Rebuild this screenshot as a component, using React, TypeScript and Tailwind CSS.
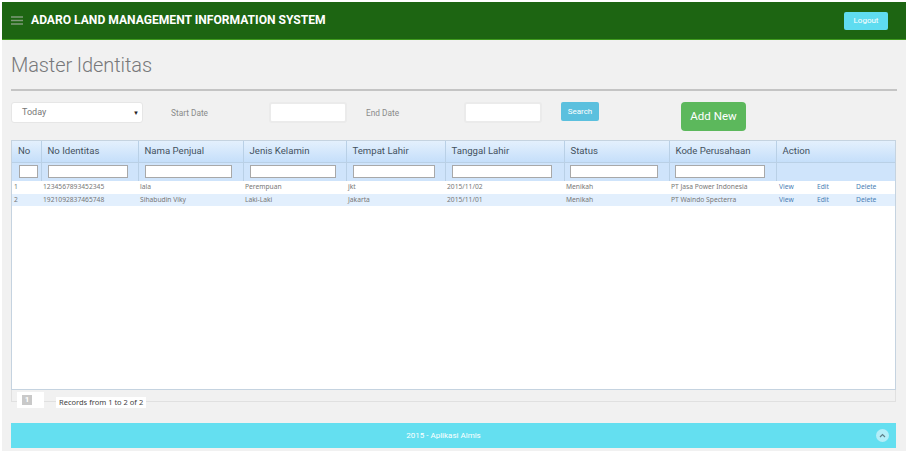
const columns = [
  { label: 'No', width: 'w-[29px]', input: 'pl-[7px] pr-[3px]' },
  { label: 'No Identitas', width: 'w-[97px]', input: 'pl-[6px] pr-[10px]' },
  { label: 'Nama Penjual', width: 'w-[105px]', input: 'pl-[6px] pr-[11px]' },
  { label: 'Jenis Kelamin', width: 'w-[103px]', input: 'pl-[6px] pr-[10px]' },
  { label: 'Tempat Lahir', width: 'w-[99px]', input: 'pl-[6px] pr-[10px]' },
  { label: 'Tanggal Lahir', width: 'w-[119px]', input: 'pl-[6px] pr-[12px]' },
  { label: 'Status', width: 'w-[105px]', input: 'pl-[5px] pr-[11px]' },
  { label: 'Kode Perusahaan', width: 'w-[107px]', input: 'pl-[5px] pr-[11px]' },
  { label: 'Action', width: 'w-[119px]', input: '' },
]

const rows = [
  ['1', '1234567893452345', 'lala', 'Perempuan', 'jkt', '2015/11/02', 'Menikah', 'PT Jasa Power Indonesia'],
  ['2', '1921092837465748', 'Sihabudin Viky', 'Laki-Laki', 'Jakarta', '2015/11/01', 'Menikah', 'PT Waindo Specterra'],
]

export default function App() {
  return (
    <div className="w-[910px] h-[451px] overflow-hidden bg-white pt-[2px] pl-[2px] pr-[4px] font-['Roboto',sans-serif]">
      <div className="h-[449px] bg-[#f1f1f1]">
        <header className="h-[38px] bg-[#1d6512] border-b border-[#3f9a1e] flex items-center pl-[9px] pr-[18px]">
          <svg width="12" height="9" viewBox="0 0 12 9" className="shrink-0">
            <path d="M0 1h12M0 4.5h12M0 8h12" stroke="#7f9a7a" strokeWidth="1.6" />
          </svg>
          <h1 className="ml-[8px] text-[12.1px] font-bold text-white">ADARO LAND MANAGEMENT INFORMATION SYSTEM</h1>
          <button className="ml-auto w-[44px] h-[18px] rounded-[2px] bg-[#5fdcf0] text-[8px] text-white">Logout</button>
        </header>

        <div className="px-[9px]">
          <h2 className="pt-[13px] text-[20px] leading-[24px] font-light text-[#77787a] tracking-[-0.1px]">Master Identitas</h2>
          <div className="mt-[12px] h-[2px] bg-[#c4c4c4]" />

          <div className="mt-[11px] h-[40px] flex items-start text-[8.3px] text-[#8a8a8a]">
            <div className="w-[132px] h-[21px] bg-white border border-[#e6e6e6] rounded-[3px] flex items-center justify-between pl-[10px] pr-[3px] text-[#777]">
              <span className="text-[9px]">Today</span>
              <span className="text-[6px] text-[#222]">▼</span>
            </div>
            <span className="ml-[28px] mt-[5px] w-[98px]">Start Date</span>
            <div className="w-[78px] h-[21px] bg-white border-2 border-[#ebebeb] rounded-[3px]" />
            <span className="ml-[19px] mt-[5px] w-[98px]">End Date</span>
            <div className="w-[78px] h-[21px] bg-white border-2 border-[#ebebeb] rounded-[3px]" />
            <button className="ml-[19px] w-[38px] h-[19px] rounded-[2px] bg-[#5bc0de] text-[8px] text-white">Search</button>
            <button className="ml-[82px] w-[65px] h-[29px] rounded-[4px] bg-[#5cb85c] text-[11.5px] text-white">Add New</button>
          </div>

          <div className="mt-[-2px] h-[250px] w-[885px] bg-white border border-[#c5d3e0]">
            <table className="table-fixed w-[883px] border-collapse">
              <thead>
                <tr className="h-[21px] bg-gradient-to-b from-[#e4f0fd] to-[#c5dffa]">
                  {columns.map((col) => (
                    <th key={col.label} className={`${col.width} px-[6px] border-r border-b border-[#b9d0e6] last:border-r-0 text-left text-[9.6px] font-normal text-[#44525e]`}>
                      {col.label}
                    </th>
                  ))}
                </tr>
                <tr className="h-[19px] bg-[#cfe4fb]">
                  {columns.map((col) => (
                    <th key={col.label} className={`${col.input} border-r border-[#b9d0e6] last:border-r-0`}>
                      {col.label !== 'Action' && (
                        <div className="h-[13px] bg-white border border-[#a8a8a8]" />
                      )}
                    </th>
                  ))}
                </tr>
              </thead>
              <tbody className="font-['Noto_Sans',sans-serif] text-[6.7px] text-[#777]">
                {rows.map((row, i) => (
                  <tr key={row[0]} className={i === 1 ? 'h-[12px] bg-[#e2effd]' : 'h-[13px] bg-white'}>
                    {row.map((cell, j) => (
                      <td key={j} className="pl-[2px] truncate">{cell}</td>
                    ))}
                    <td className="pl-[3px]">
                      <div className="flex text-[#4a7fb5]">
                        <span className="w-[38px]">View</span>
                        <span className="w-[39px]">Edit</span>
                        <span>Delete</span>
                      </div>
                    </td>
                  </tr>
                ))}
              </tbody>
            </table>
          </div>

          <div className="relative h-[12px] w-[885px] border-l border-r border-b border-[#e0e0e0]">
            <div className="absolute left-[5px] top-[2px] h-[16px] w-[27px] bg-white flex items-center pl-[5px]">
              <span className="w-[10px] h-[10px] bg-[#c9c9c9] text-white text-[8px] leading-[10px] text-center font-bold">1</span>
            </div>
            <div className="absolute left-[44px] top-[7px] h-[11px] px-[3px] bg-white flex items-center font-['Noto_Sans',sans-serif] text-[7.5px] text-[#444]">
              Records from 1 to 2 of 2
            </div>
          </div>

          <footer className="relative mt-[21px] h-[25px] w-[885px] bg-[#64dff0] flex items-center justify-center pr-[20px] text-[8px] text-white">
            2015 - Aplikasi Almis
            <span className="absolute right-[7px] top-[6px] w-[13px] h-[13px] rounded-full bg-[#b4eef8] flex items-center justify-center">
              <svg width="7" height="5" viewBox="0 0 7 5">
                <path d="M1 4l2.5-2.5L6 4" fill="none" stroke="#5f7f88" strokeWidth="1.2" />
              </svg>
            </span>
          </footer>
        </div>
      </div>
    </div>
  )
}
